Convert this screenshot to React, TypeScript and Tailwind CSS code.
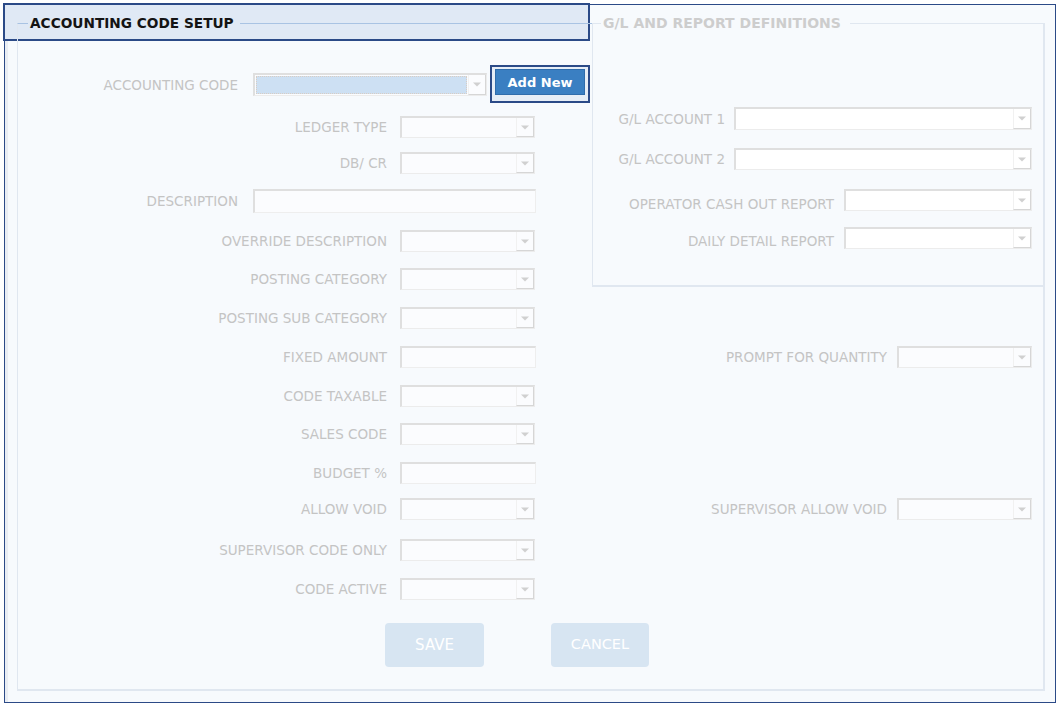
import React from 'react';
import clsx from 'clsx';

// small down arrow used by the disabled combo boxes
const Caret = () => (
    <svg width="8" height="5" viewBox="0 0 8 5">
        <path d="M0 0.5h8L4 4.5z" fill="#d0d0d0" />
    </svg>
);

interface BoxProps {
    w: string;
    h?: string;
    white?: boolean;
}

const Combo: React.FC<BoxProps> = ({ w, h = 'h-[22px]', white }) => (
    <div
        className={clsx(
            'flex shrink-0 border-t-2 border-l-2 border-r border-b border-t-[#dfdfdf] border-l-[#dfdfdf] border-r-[#ececec] border-b-[#ececec]',
            w,
            h,
            white ? 'bg-white' : 'bg-[#fbfcfe]'
        )}
    >
        <div className="flex-1" />
        <div className="flex w-[18px] items-center justify-center border-l border-r border-b border-l-[#f1f1f1] border-r-[#d6d6d6] border-b-[#d6d6d6]">
            <Caret />
        </div>
    </div>
);

const TextBox: React.FC<BoxProps> = ({ w, h = 'h-[22px]' }) => (
    <div
        className={clsx(
            'shrink-0 border-t-2 border-l-2 border-r border-b border-t-[#dfdfdf] border-l-[#dfdfdf] border-r-[#eeeeee] border-b-[#eeeeee] bg-[#fbfcfe]',
            w,
            h
        )}
    />
);

const Label: React.FC<{ text: string; w?: string; pt?: string }> = ({ text, w, pt = 'pt-[2px]' }) => (
    <span
        className={clsx(
            'shrink-0 whitespace-nowrap text-right text-[13.5px] leading-none text-[#c4c4c4]',
            w,
            pt
        )}
    >
        {text}
    </span>
);

// left-column row: label right-aligned to x=387, field at x=400
const FieldRow: React.FC<{
    label: string;
    mt: string;
    text?: boolean;
    right?: string;
}> = ({ label, mt, text, right }) => (
    <div className={clsx('flex h-[22px] items-center', mt)}>
        <Label text={label} w="w-[369px]" />
        <div className="ml-[13px]">
            {text ? <TextBox w="w-[136px]" /> : <Combo w="w-[135px]" />}
        </div>
        {right && (
            <div className="ml-auto flex items-center gap-[10px] pr-[11px]">
                <Label text={right} />
                <Combo w="w-[135px]" />
            </div>
        )}
    </div>
);

const GlRow: React.FC<{
    label: string;
    mt: string;
    w: string;
    h?: string;
    gap: string;
    pt?: string;
}> = ({ label, mt, w, h = 'h-[22px]', gap, pt }) => (
    <div className={clsx('flex items-center justify-end pr-[11px]', mt, h, gap)}>
        <Label text={label} pt={pt} />
        <Combo w={w} h={h} white />
    </div>
);

export default function App() {
    return (
        <div className="h-[708px] w-[1059px] bg-white pl-[4px] pt-[4px] font-['DejaVu_Sans',sans-serif]">
            <div className="relative flex h-[699px] w-[1052px] flex-col border border-[#2b4a87] bg-[#f7fafd] shadow-[inset_3px_0_0_#e9edf3]">
                {/* selection highlight behind the section title */}
                <div className="absolute -left-[2px] -top-[2px] h-[38px] w-[587px] border-2 border-[#2b4a87] bg-[#e0e9f5]" />

                <fieldset className="relative mb-[11px] ml-[12px] mr-[10px] mt-[10px] min-w-0 flex-1 border border-b-2 border-r-2 border-[#e0e7f0] border-t-[#a9c3e3]">
                    <legend className="ml-[10px] pl-[2px] pr-[6px] text-[13.7px] font-bold leading-[16px] text-[#141414]">
                        ACCOUNTING CODE SETUP
                    </legend>

                    <div className="flex">
                        {/* left column, top part */}
                        <div className="w-[574px] shrink-0 pt-[34px]">
                            <div className="flex h-[38px] items-center">
                                <Label text="ACCOUNTING CODE" w="w-[220px]" pt="pt-[4px]" />
                                <div className="ml-[15px] flex h-[23px] w-[234px] border-t-2 border-l-2 border-r border-b border-t-[#dfdfdf] border-l-[#dfdfdf] border-r-[#ececec] border-b-[#ececec] bg-[#fbfcfe]">
                                    <div className="m-[1px] flex-1 border border-dotted border-[#d8cdc4] bg-[#cde0f3]" />
                                    <div className="flex w-[18px] items-center justify-center border-l border-r border-b border-l-[#f1f1f1] border-r-[#d6d6d6] border-b-[#d6d6d6]">
                                        <Caret />
                                    </div>
                                </div>
                                <div className="ml-[3px] h-[38px] w-[100px] border-2 border-[#2b4a87] bg-[#e6edf6] pl-[3px] pt-[2px]">
                                    <button className="h-[26px] w-[90px] border border-[#2f6cab] bg-[#3a7fc2] text-[13px] font-bold leading-none text-white">
                                        Add New
                                    </button>
                                </div>
                            </div>
                            <FieldRow label="LEDGER TYPE" mt="mt-[13px]" />
                            <FieldRow label="DB/ CR" mt="mt-[14px]" />
                            <div className="mt-[15px] flex h-[24px] items-center">
                                <Label text="DESCRIPTION" w="w-[220px]" />
                                <div className="ml-[15px]">
                                    <TextBox w="w-[283px]" h="h-[24px]" />
                                </div>
                            </div>
                            <FieldRow label="OVERRIDE DESCRIPTION" mt="mt-[17px]" />
                            <FieldRow label="POSTING CATEGORY" mt="mt-[16px]" />
                        </div>

                        {/* G/L and report definitions */}
                        <fieldset className="-mr-[2px] -mt-[16px] h-[272px] w-[453px] shrink-0 self-start border border-b-2 border-r-2 border-[#e0e7f0]">
                            <legend className="ml-[8px] bg-[#f7fafd] pl-[2px] pr-[9px] text-[14px] font-bold leading-[16px] text-[#cdcdcd]">
                                G/L AND REPORT DEFINITIONS
                            </legend>
                            <GlRow label="G/L ACCOUNT 1" mt="mt-[76px]" w="w-[298px]" h="h-[23px]" gap="gap-[9px]" />
                            <GlRow label="G/L ACCOUNT 2" mt="mt-[18px]" w="w-[298px]" gap="gap-[9px]" />
                            <GlRow
                                label="OPERATOR CASH OUT REPORT"
                                mt="mt-[19px]"
                                w="w-[188px]"
                                gap="gap-[10px]"
                                pt="pt-[9px]"
                            />
                            <GlRow
                                label="DAILY DETAIL REPORT"
                                mt="mt-[16px]"
                                w="w-[188px]"
                                gap="gap-[10px]"
                                pt="pt-[8px]"
                            />
                        </fieldset>
                    </div>

                    <FieldRow label="POSTING SUB CATEGORY" mt="mt-[17px]" />
                    <FieldRow label="FIXED AMOUNT" mt="mt-[17px]" text right="PROMPT FOR QUANTITY" />
                    <FieldRow label="CODE TAXABLE" mt="mt-[17px]" />
                    <FieldRow label="SALES CODE" mt="mt-[16px]" />
                    <FieldRow label="BUDGET %" mt="mt-[17px]" text />
                    <FieldRow label="ALLOW VOID" mt="mt-[14px]" right="SUPERVISOR ALLOW VOID" />
                    <FieldRow label="SUPERVISOR CODE ONLY" mt="mt-[19px]" />
                    <FieldRow label="CODE ACTIVE" mt="mt-[17px]" />

                    <div className="mt-[23px] flex">
                        <button className="ml-[367px] h-[44px] w-[99px] rounded-[4px] bg-[#d7e5f2] text-[15px] text-white">
                            SAVE
                        </button>
                        <button className="ml-[67px] h-[44px] w-[98px] rounded-[4px] bg-[#d7e5f2] text-[14.5px] text-white">
                            CANCEL
                        </button>
                    </div>
                </fieldset>
            </div>
        </div>
    );
}
